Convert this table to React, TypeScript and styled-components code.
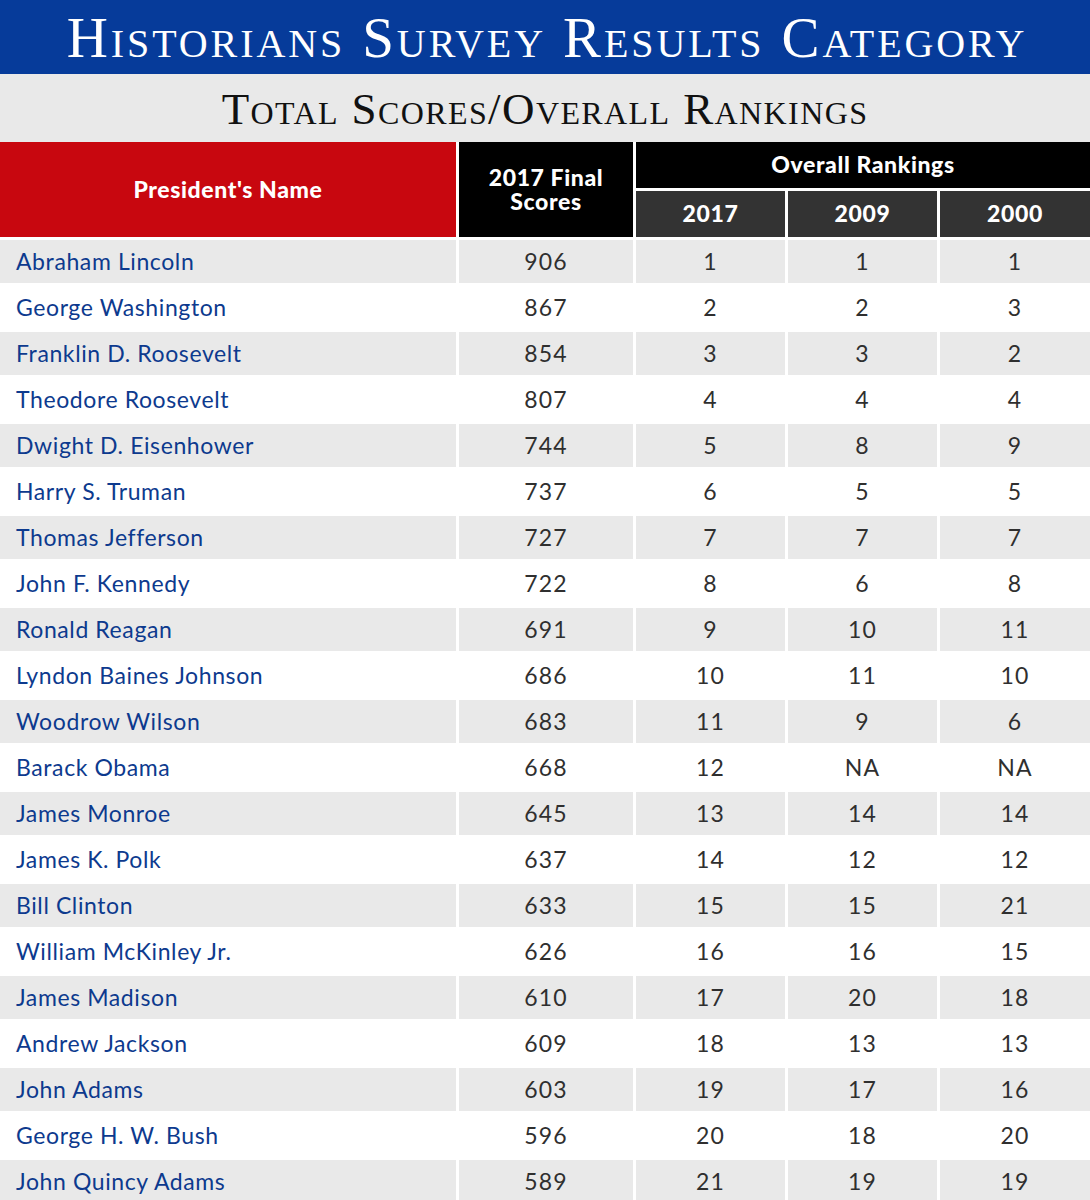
import styled, { createGlobalStyle } from "styled-components"

const GlobalStyle = createGlobalStyle`
  html, body {
    margin: 0;
    padding: 0;
    background: #ffffff;
  }
`

const rows: [string, string, string, string, string][] = [
  ["Abraham Lincoln", "906", "1", "1", "1"],
  ["George Washington", "867", "2", "2", "3"],
  ["Franklin D. Roosevelt", "854", "3", "3", "2"],
  ["Theodore Roosevelt", "807", "4", "4", "4"],
  ["Dwight D. Eisenhower", "744", "5", "8", "9"],
  ["Harry S. Truman", "737", "6", "5", "5"],
  ["Thomas Jefferson", "727", "7", "7", "7"],
  ["John F. Kennedy", "722", "8", "6", "8"],
  ["Ronald Reagan", "691", "9", "10", "11"],
  ["Lyndon Baines Johnson", "686", "10", "11", "10"],
  ["Woodrow Wilson", "683", "11", "9", "6"],
  ["Barack Obama", "668", "12", "NA", "NA"],
  ["James Monroe", "645", "13", "14", "14"],
  ["James K. Polk", "637", "14", "12", "12"],
  ["Bill Clinton", "633", "15", "15", "21"],
  ["William McKinley Jr.", "626", "16", "16", "15"],
  ["James Madison", "610", "17", "20", "18"],
  ["Andrew Jackson", "609", "18", "13", "13"],
  ["John Adams", "603", "19", "17", "16"],
  ["George H. W. Bush", "596", "20", "18", "20"],
  ["John Quincy Adams", "589", "21", "19", "19"],
]

const columns = "456px 174px 149px 149px 1fr"

const Page = styled.div`
  width: 1090px;
  font-family: Lato, "Open Sans", sans-serif;
`

const Banner = styled.header`
  height: 74px;
  background: #063b9a;
  display: flex;
  align-items: center;
  justify-content: center;
`

const Title = styled.h1`
  margin: 0;
  font-family: "Liberation Serif", "DejaVu Serif", serif;
  font-variant: small-caps;
  font-weight: 400;
  font-size: 57px;
  letter-spacing: 2.9px;
  color: #ffffff;
  line-height: 1;
  padding-left: 4px;
`

const SubBanner = styled.div`
  height: 68px;
  background: #e9e9e9;
  display: flex;
  align-items: center;
  justify-content: center;
`

const Subtitle = styled.h2`
  margin: 0;
  font-family: "Liberation Serif", "DejaVu Serif", serif;
  font-variant: small-caps;
  font-weight: 400;
  font-size: 45px;
  letter-spacing: 1.4px;
  color: #111111;
  line-height: 1;
  padding-top: 2px;
`

const Table = styled.div`
  display: flex;
  flex-direction: column;
  gap: 3px;
`

const HeadGrid = styled.div`
  display: grid;
  grid-template-columns: ${columns};
  grid-template-rows: 46px 46px;
  gap: 3px;
`

const HeadCell = styled.div<{ $bg: string; $span?: string; $rows?: boolean }>`
  background: ${({ $bg }) => $bg};
  color: #ffffff;
  font-weight: 900;
  font-size: 23px;
  letter-spacing: 0.6px;
  line-height: 24px;
  text-align: center;
  display: flex;
  align-items: center;
  justify-content: center;
  padding-bottom: 2px;
  grid-column: ${({ $span }) => $span || "auto"};
  grid-row: ${({ $rows }) => ($rows ? "1 / span 2" : "auto")};
`

const Row = styled.div<{ $shaded: boolean }>`
  display: grid;
  grid-template-columns: ${columns};
  gap: 3px;
  height: 43px;
  & > div {
    background: ${({ $shaded }) => ($shaded ? "#e9e9e9" : "#ffffff")};
  }
`

const NameCell = styled.div`
  display: flex;
  align-items: center;
  padding: 0 0 2px 16px;
  color: #0d3a8e;
  font-size: 23px;
  letter-spacing: 0.6px;
`

const NumCell = styled.div`
  display: flex;
  align-items: center;
  justify-content: center;
  padding-bottom: 2px;
  color: #2f2f2f;
  font-size: 23px;
  letter-spacing: 1.2px;
`

export default function App() {
  return (
    <Page>
      <GlobalStyle />
      <Banner>
        <Title>Historians Survey Results Category</Title>
      </Banner>
      <SubBanner>
        <Subtitle>Total Scores/Overall Rankings</Subtitle>
      </SubBanner>
      <Table>
        <HeadGrid>
          <HeadCell $bg="#c8070f" $rows>President's Name</HeadCell>
          <HeadCell $bg="#000000" $rows>
            2017 Final
            <br />
            Scores
          </HeadCell>
          <HeadCell $bg="#000000" $span="3 / span 3">Overall Rankings</HeadCell>
          <HeadCell $bg="#333333">2017</HeadCell>
          <HeadCell $bg="#333333">2009</HeadCell>
          <HeadCell $bg="#333333">2000</HeadCell>
        </HeadGrid>
        {rows.map((r, i) => (
          <Row key={r[0]} $shaded={i % 2 === 0}>
            <NameCell>{r[0]}</NameCell>
            <NumCell>{r[1]}</NumCell>
            <NumCell>{r[2]}</NumCell>
            <NumCell>{r[3]}</NumCell>
            <NumCell>{r[4]}</NumCell>
          </Row>
        ))}
      </Table>
    </Page>
  )
}
